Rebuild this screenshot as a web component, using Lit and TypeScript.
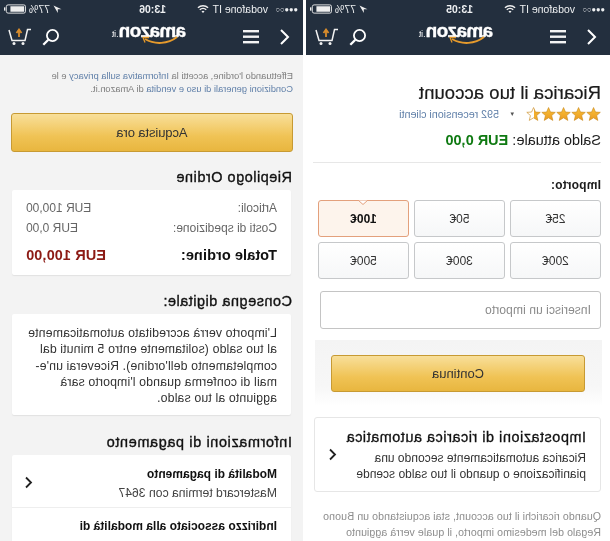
import { LitElement, html, css, svg } from "lit";
import { customElement } from "lit/decorators.js";

const star = (x: number, half = false) => svg`
  <g transform="translate(${x} 0)">
    <polygon points="6.5,0.5 8.3,4.7 12.8,5 9.4,8 10.5,12.5 6.5,10.1 2.5,12.5 3.6,8 0.2,5 4.7,4.7"
      fill="${half ? "url(#half)" : "url(#full)"}" stroke="#c98a1e" stroke-width=".6"/>
  </g>`;

@customElement("app-root")
export class AppRoot extends LitElement {
  static styles = css`
    :host { display: block; width: 610px; height: 541px; overflow: hidden; background: #fff; }
    * { box-sizing: border-box; }
    .flip {
      width: 610px; height: 541px; display: flex; gap: 3px; overflow: hidden;
      transform: scaleX(-1); filter: blur(.3px);
      font-family: "Liberation Sans", Arial, sans-serif; color: #1c1c1c;
    }
    .phone { height: 541px; overflow: hidden; flex: none; }
    .a { width: 304px; background: #fff; }
    .b { width: 303px; background: #f3f3f3; }
    .top { background: #232f3e; height: 55px; color: #fff; }
    .status { height: 18px; display: flex; align-items: center; font-size: 10.5px; padding: 0 4px 0 5px; position: relative; color: #eef0f2; }
    .dots { font-size: 7.5px; margin-right: 3px; width: 27px; white-space: nowrap; }
    .wifi { margin-left: 4px; }
    .time { margin-left: 28px; width: 32px; text-align: center; font-weight: 700; }
    .right { margin-left: auto; display: flex; align-items: center; gap: 3px; }
    .nav { height: 37px; display: flex; align-items: center; padding-left: 12px; }
    .chev { width: 12px; }
    .burger { margin-left: 20px; width: 16px; }
    .logo { margin-left: 57px; width: 76px; height: 32px; display: flex; align-items: baseline; position: relative; line-height: 20px; font-weight: 700; font-size: 19px; letter-spacing: -.7px; -webkit-text-stroke: .35px #fff; }
    .logo small { font-size: 8.5px; letter-spacing: 0; margin-left: 1px; font-weight: 400; -webkit-text-stroke: 0; }
    .smile { position: absolute; left: 8px; top: 15px; }
    .search { margin-left: 50px; width: 18px; }
    .cart { margin-left: 10px; width: 24px; }

    .acct { padding: 26px 0 0 9px; }
    h1 { margin: 0; font-size: 18.5px; line-height: 24px; font-weight: 400; letter-spacing: .05px; -webkit-text-stroke: .2px #111; }
    .rate { display: flex; align-items: center; height: 16px; margin-top: 1px; font-size: 10.7px; color: #5f7fa8; }
    .caret { color: #555; font-size: 7px; margin: 0 11px; }
    .saldo { font-size: 14.5px; margin-top: 9px; line-height: 18px; }
    .saldo b { color: #0f7a12; font-weight: 700; }
    .hr { height: 1px; background: #e7e7e7; margin-top: 13px; width: 288px; }
    .lab { font-size: 12px; font-weight: 700; margin-top: 15px; line-height: 14px; letter-spacing: .2px; }
    .amts { display: grid; grid-template-columns: 91px 91px 91px; gap: 5px; margin-top: 8px; width: 283px; grid-auto-rows: 37px; }
    .amt { border: 1px solid #c6c8ca; border-radius: 3px; background: linear-gradient(#fff, #f6f7f8); display: flex; align-items: center; justify-content: center; font-size: 12px; color: #333; position: relative; }
    .amt.on { border-color: #e3a07c; background: #fdf4ec; font-weight: 700; color: #111; }
    .notch { position: absolute; top: -1px; left: 40px; }
    .inp { width: 281px; height: 38px; margin-top: 12px; border: 1px solid #c4c4c4; border-radius: 3px; display: flex; align-items: center; padding-left: 9px; font-size: 12px; color: #8a8a8a; letter-spacing: .1px; }
    .band { margin: 11px 0 0 -1px; padding: 15px 0 14px 17px; width: 287px; background: linear-gradient(#f4f4f4, #f7f7f7 70%, #fff); }
    .btn { border: 1px solid #c79a33; border-radius: 3px; background: linear-gradient(#f8df9a, #f0c355 60%, #e8b63f); display: flex; align-items: center; justify-content: center; color: #333; font-size: 13px; }
    .band .btn { width: 254px; height: 37px; }
    .auto { width: 287px; height: 75px; margin-top: 11px; border: 1px solid #e6e6e6; border-radius: 3px; padding: 10px 0 0 14px; position: relative; }
    .auto b { font-size: 14.5px; font-weight: 400; display: block; line-height: 18px; letter-spacing: .5px; color: #111; -webkit-text-stroke: .3px #111; }
    .auto p { margin: 4px 0 0; font-size: 12px; line-height: 16px; letter-spacing: .02px; color: #333; width: 250px; }
    .chev2 { position: absolute; }
    .auto .chev2 { left: 263px; top: 30px; }
    .foot { margin: 16px 0 0; font-size: 10.6px; line-height: 16px; color: #8d8d8d; white-space: nowrap; letter-spacing: .08px; }

    .notice { margin: 15px 0 0 10px; font-size: 9.3px; line-height: 13px; color: #7d7d7d; white-space: nowrap; }
    .notice span { color: #5f7fa8; }
    .b .btn { width: 282px; height: 39px; margin: 17px 0 0 10px; letter-spacing: -.1px; }
    h2 { margin: 16px 0 0 11px; font-size: 14.5px; line-height: 18px; font-weight: 400; letter-spacing: .5px; color: #111; -webkit-text-stroke: .35px #111; }
    .card { margin: 4px 0 0 12px; width: 279px; background: #fff; border-radius: 2px; box-shadow: 0 1px 1px #e2e2e2; }
    .sum { height: 85px; padding: 8px 14px 0 14px; font-size: 12px; color: #666; }
    .row { display: flex; justify-content: space-between; line-height: 20px; white-space: nowrap; }
    .tot { margin-top: 7px; font-size: 14.5px; color: #111; font-weight: 700; letter-spacing: .1px; }
    .tot span:last-child { color: #8c1a14; }
    .del { height: 101px; padding: 11px 10px 0 14px; font-size: 12.3px; line-height: 16.25px; color: #333; letter-spacing: .14px; }
    .h2b { margin-top: 17px; }
    .h2c { margin-top: 18px; letter-spacing: .6px; }
    .pay { height: 90px; }
    .pay > div { padding: 10px 0 0 14px; position: relative; }
    .pay > div:first-child { height: 53px; padding-top: 11px; border-bottom: 1px solid #eee; }
    .pay b { display: block; font-size: 12px; line-height: 17px; color: #111; font-weight: 700; }
    .pay span { font-size: 12.2px; line-height: 15px; color: #444; }
    .pay .chev2 { left: 258px; top: 21px; }
  `;

  header(time: string) {
    return html`<div class="top">
      <div class="status">
        <span class="dots">●●●○○</span><span>vodafone IT</span>
        <svg class="wifi" width="12" height="10" viewBox="0 0 13 10" fill="none" stroke="#eee" stroke-width="1.5"><path d="M1 3.6a8 8 0 0 1 11 0M3 5.8a5 5 0 0 1 7 0"/><path d="M6.5 9.3 4.9 7.6a2.3 2.3 0 0 1 3.2 0z" fill="#eee" stroke="none"/></svg>
        <span class="time">${time}</span>
        <span class="right">
          <svg width="9" height="9" viewBox="0 0 9 9"><path d="M8.5.5 .5 4.2h3.7v3.9z" fill="#eee"/></svg>
          <span>77%</span>
          <svg width="22" height="10" viewBox="0 0 24 10"><rect x=".5" y=".5" width="21" height="9" rx="2" fill="none" stroke="#eee"/><rect x="2" y="2" width="15" height="6" fill="#eee"/><rect x="22.5" y="3.2" width="1.5" height="3.6" fill="#eee"/></svg>
        </span>
      </div>
      <div class="nav">
        <svg class="chev" width="12" height="18" viewBox="0 0 12 18" fill="none" stroke="#fff" stroke-width="2"><path d="M10 2 3 9l7 7"/></svg>
        <svg class="burger" width="16" height="14" viewBox="0 0 16 14" fill="#f4f4f4"><rect width="16" height="2.4"/><rect y="5.5" width="16" height="2.4"/><rect y="11" width="16" height="2.4"/></svg>
        <div class="logo">amazon<small>.it</small>
          <svg class="smile" width="36" height="10" viewBox="0 0 36 10" fill="none"><path d="M1 1c9 7 22 8 32 2" stroke="#e59a2c" stroke-width="2"/><path d="M29 1.500 35 1.500 33 6.500" stroke="#e59a2c" stroke-width="1.300"/></svg>
        </div>
        <svg class="search" width="18" height="18" viewBox="0 0 18 18" fill="none" stroke="#fff" stroke-width="1.800"><circle cx="7.500" cy="7.500" r="5.600"/><path d="m11.700 11.700 5 5" stroke-width="2.300"/></svg>
        <svg class="cart" width="24" height="18" viewBox="0 0 24 18" fill="none" stroke="#f2f2f2" stroke-width="1.500"><path d="M1 1.500h3.500L7 12.500h13L23 2"/><circle cx="9" cy="15.500" r="1.500" fill="#f2f2f2" stroke="none"/><circle cx="18" cy="15.500" r="1.500" fill="#f2f2f2" stroke="none"/><path d="M13 2v7M10.500 5 13 1.500 15.500 5" stroke="#d88c2c" stroke-width="1.800"/></svg>
      </div>
    </div>`;
  }

  chev() {
    return html`<svg class="chev2" width="9" height="13" viewBox="0 0 9 13" fill="none" stroke="#222" stroke-width="1.800"><path d="M7 1.500 2 6.500l5 5"/></svg>`;
  }

  render() {
    const amts = ["25€", "50€", "100€", "200€", "300€", "500€"];
    return html`<div class="flip">
      <div class="phone a">
        ${this.header("13:05")}
        <div class="acct">
          <h1>Ricarica il tuo account</h1>
          <div class="rate">
            <svg width="76" height="15" viewBox="0 0 70 14">
              <defs>
                <linearGradient id="full" x1="0" y1="0" x2="0" y2="1"><stop offset="0" stop-color="#f9c13a"/><stop offset="1" stop-color="#eb9a1f"/></linearGradient>
                <linearGradient id="half"><stop offset=".5" stop-color="#f2ad2b"/><stop offset=".5" stop-color="#fff"/></linearGradient>
              </defs>
              ${[0, 14, 28, 42].map((x) => star(x))}${star(56, true)}
            </svg>
            <span class="caret">▾</span><span>592 recensioni clienti</span>
          </div>
          <div class="saldo">Saldo attuale: <b>EUR 0,00</b></div>
          <div class="hr"></div>
          <div class="lab">Importo:</div>
          <div class="amts">
            ${amts.map((a) => html`<div class="amt ${a === "100€" ? "on" : ""}">${a === "100€" ? html`<svg class="notch" width="10" height="5" viewBox="0 0 10 5"><path d="M0 0 5 4.500 10 0z" fill="#fff" stroke="#e3a07c"/></svg>` : ""}${a}</div>`)}
          </div>
          <div class="inp">Inserisci un importo</div>
          <div class="band"><div class="btn">Continua</div></div>
          <div class="auto">
            <b>Impostazioni di ricarica automatica</b>
            <p>Ricarica automaticamente secondo una pianificazione o quando il tuo saldo scende</p>
            ${this.chev()}
          </div>
          <p class="foot">Quando ricarichi il tuo account, stai acquistando un Buono<br>Regalo del medesimo importo, il quale verrà aggiunto</p>
        </div>
      </div>
      <div class="phone b">
        ${this.header("13:06")}
        <div class="notice">Effettuando l'ordine, accetti la <span>Informativa sulla privacy</span> e le<br><span>Condizioni generali di uso e vendita</span> di Amazon.it.</div>
        <div class="btn">Acquista ora</div>
        <h2>Riepilogo Ordine</h2>
        <div class="card sum">
          <div class="row"><span>Articoli:</span><span>EUR 100,00</span></div>
          <div class="row"><span>Costi di spedizione:</span><span>EUR 0,00</span></div>
          <div class="row tot"><span>Totale ordine:</span><span>EUR 100,00</span></div>
        </div>
        <h2 class="h2b">Consegna digitale:</h2>
        <div class="card del">L'importo verrà accreditato automaticamente al tuo saldo (solitamente entro 5 minuti dal completamento dell'ordine). Riceverai un'e-mail di conferma quando l'importo sarà aggiunto al tuo saldo.</div>
        <h2 class="h2c">Informazioni di pagamento</h2>
        <div class="card pay">
          <div><b>Modalità di pagamento</b><span>Mastercard termina con 3647</span>${this.chev()}</div>
          <div><b>Indirizzo associato alla modalità di</b></div>
        </div>
      </div>
    </div>`;
  }
}
